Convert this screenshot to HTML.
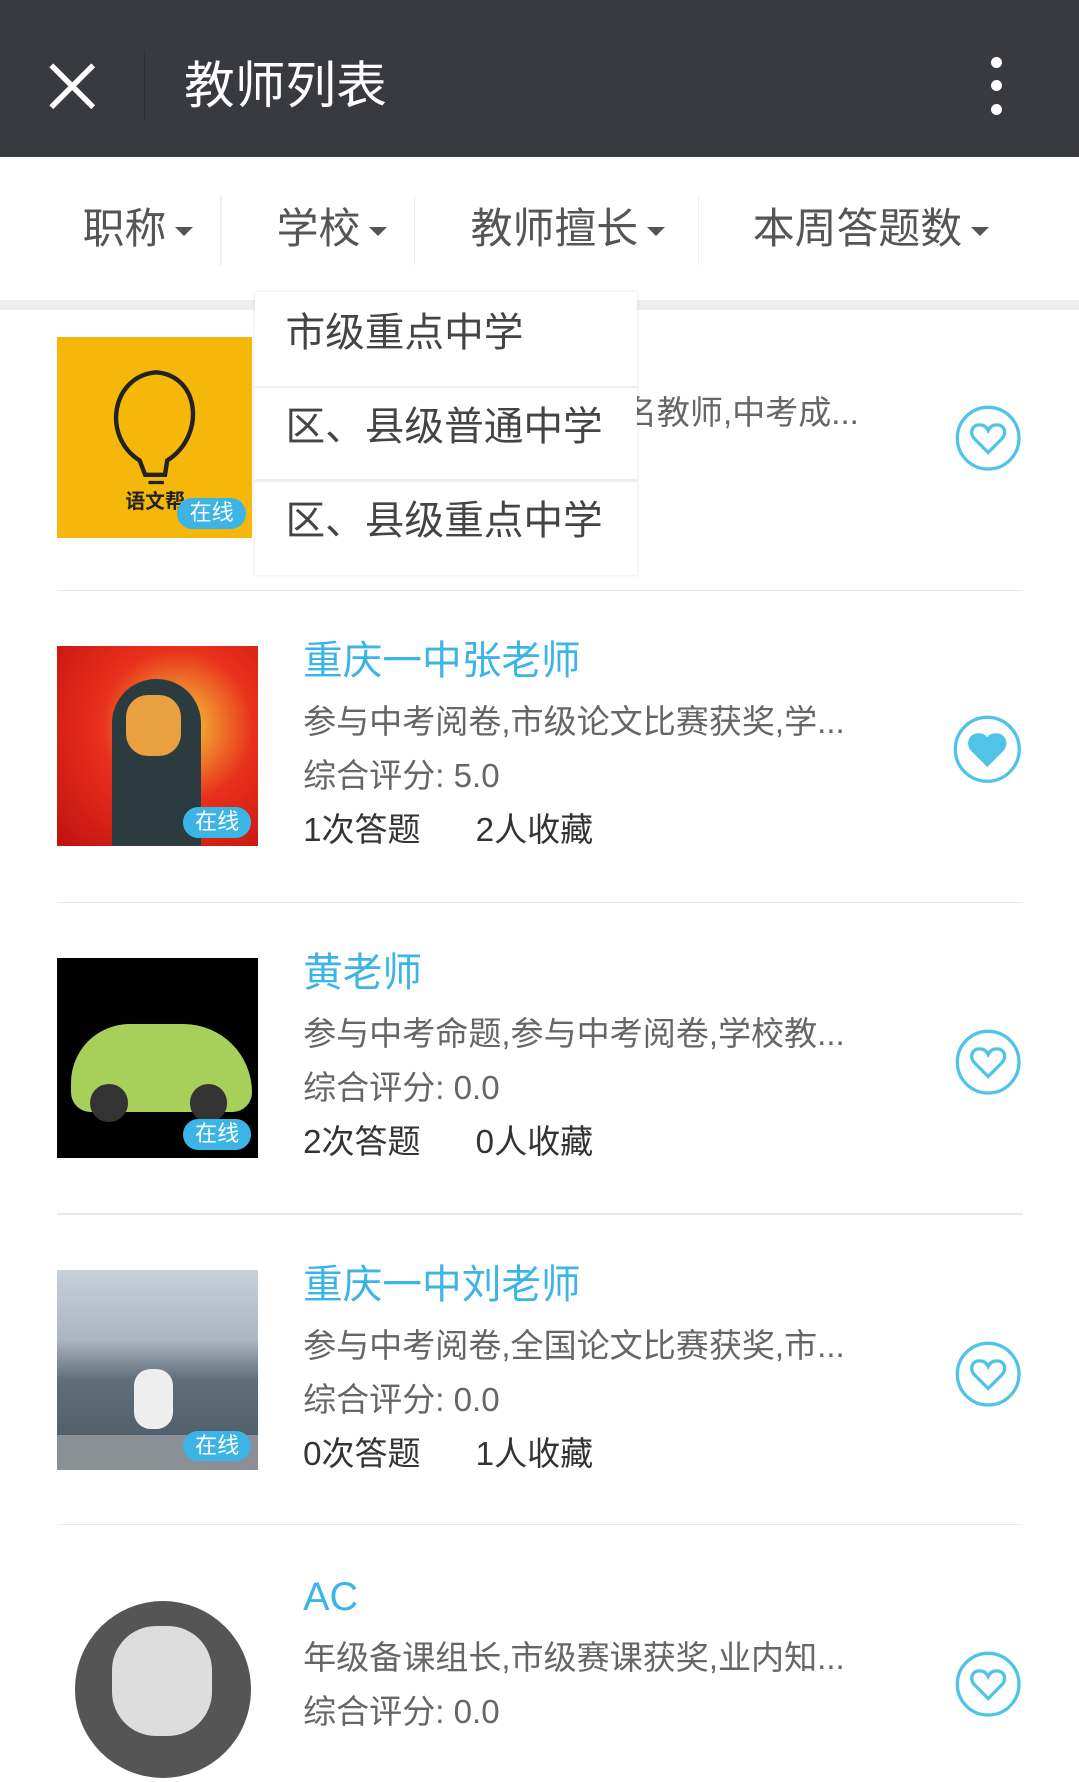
<!DOCTYPE html>
<html><head><meta charset="utf-8">
<style>
html,body{margin:0;padding:0;}
body{width:979px;height:1568px;overflow:hidden;zoom:1.10214;background:#fff;font-family:"Liberation Sans","Noto Sans CJK SC",sans-serif;position:relative;}
.abs{position:absolute;}
.hdr{left:0;top:0;width:979px;height:142px;background:#393a3f;}
.title{left:167px;top:48px;font-size:46px;color:#fff;line-height:60px;}
.filter{top:182px;font-size:38px;color:#555;line-height:50px;}
.tri{display:inline-block;width:0;height:0;border-left:9px solid transparent;border-right:9px solid transparent;border-top:9px solid #555;vertical-align:middle;margin-left:8px;}
.vd{top:178px;width:1px;height:62px;background:#eee;}
.sep{left:52px;width:876px;height:1px;background:#e8e8e8;}
.name{left:275px;font-size:36px;color:#3cb4e6;line-height:44px;}
.desc{left:275px;font-size:30px;color:#666;line-height:40px;}
.cnt{left:275px;font-size:30px;color:#333;line-height:40px;}
.img{left:52px;width:182px;height:182px;overflow:hidden;}
.badge{position:absolute;right:6px;bottom:8px;width:62px;height:28px;border-radius:14px;background:#3cb4e6;color:#fff;font-size:20px;line-height:28px;text-align:center;}
.dd{left:231px;top:265px;width:347px;height:257px;background:#fff;box-shadow:0 0 3px rgba(0,0,0,.12);}
.ddi{position:absolute;left:28px;font-size:36px;color:#444;line-height:44px;}
</style></head><body>
<div class="abs hdr"></div>
<svg class="abs" style="left:44px;top:56px" width="44" height="44"><path d="M3 3L41 41M41 3L3 41" stroke="#fff" stroke-width="5"/></svg>
<div class="abs" style="left:131px;top:45px;width:1px;height:65px;background:#2e2f33"></div>
<div class="abs title">教师列表</div>
<div class="abs" style="left:899px;top:52px;width:10px;height:10px;border-radius:5px;background:#fff"></div>
<div class="abs" style="left:899px;top:73px;width:10px;height:10px;border-radius:5px;background:#fff"></div>
<div class="abs" style="left:899px;top:94px;width:10px;height:10px;border-radius:5px;background:#fff"></div>

<div class="abs filter" style="left:75px">职称<span class="tri"></span></div>
<div class="abs vd" style="left:200px"></div>
<div class="abs filter" style="left:251px">学校<span class="tri"></span></div>
<div class="abs vd" style="left:376px"></div>
<div class="abs filter" style="left:427px">教师擅长<span class="tri"></span></div>
<div class="abs vd" style="left:633px"></div>
<div class="abs filter" style="left:683px">本周答题数<span class="tri"></span></div>
<div class="abs" style="left:0;top:272px;width:979px;height:9px;background:#eeeef0"></div>

<div class="abs img" style="top:306px;width:177px;background:#f5b80a">
<svg width="177" height="182"><path d="M75 112 C40 90 50 35 90 32 C130 35 135 90 100 112 L98 125 L80 125 Z" fill="none" stroke="#222" stroke-width="4"/><path d="M85 125 L95 125 M83 132 L97 132" stroke="#222" stroke-width="3"/><text x="62" y="155" font-size="18" font-weight="bold" fill="#222">语文帮</text></svg>
<div class="badge">在线</div></div>
<div class="abs desc" style="top:356px;left:566px">名教师,中考成...</div>
<div class="abs sep" style="top:535px"></div>

<div class="abs img" style="top:586px;background:radial-gradient(circle at 60% 40%,#f7d23a,#e8301c 45%,#c01010)">
<div style="position:absolute;left:50px;top:30px;width:80px;height:152px;background:#2b3b40;border-radius:40px 40px 0 0"></div>
<div style="position:absolute;left:62px;top:45px;width:50px;height:55px;background:#e8a040;border-radius:20px"></div>
<div class="badge">在线</div></div>
<div class="abs name" style="top:578px">重庆一中张老师</div>
<div class="abs desc" style="top:636px">参与中考阅卷,市级论文比赛获奖,学...</div>
<div class="abs desc" style="top:685px">综合评分: 5.0</div>
<div class="abs cnt" style="top:734px">1次答题&nbsp;&nbsp;&nbsp;&nbsp;&nbsp;&nbsp;2人收藏</div>
<div class="abs sep" style="top:818px"></div>

<div class="abs img" style="top:869px;background:#000">
<div style="position:absolute;left:12px;top:60px;width:165px;height:80px;background:#a6d05a;border-radius:60px 70px 20px 20px"></div>
<div style="position:absolute;left:30px;top:115px;width:34px;height:34px;border-radius:17px;background:#333"></div>
<div style="position:absolute;left:120px;top:115px;width:34px;height:34px;border-radius:17px;background:#333"></div>
<div class="badge">在线</div></div>
<div class="abs name" style="top:861px">黄老师</div>
<div class="abs desc" style="top:919px">参与中考命题,参与中考阅卷,学校教...</div>
<div class="abs desc" style="top:968px">综合评分: 0.0</div>
<div class="abs cnt" style="top:1017px">2次答题&nbsp;&nbsp;&nbsp;&nbsp;&nbsp;&nbsp;0人收藏</div>
<div class="abs sep" style="top:1101px"></div>

<div class="abs img" style="top:1152px;background:linear-gradient(#c8d0d8 0%,#aab6c0 35%,#5f6e7a 55%,#4a5864 100%)">
<div style="position:absolute;left:70px;top:90px;width:35px;height:55px;background:#eee;border-radius:15px"></div>
<div style="position:absolute;left:0;top:150px;width:182px;height:32px;background:#8a9096"></div>
<div class="badge">在线</div></div>
<div class="abs name" style="top:1144px">重庆一中刘老师</div>
<div class="abs desc" style="top:1202px">参与中考阅卷,全国论文比赛获奖,市...</div>
<div class="abs desc" style="top:1251px">综合评分: 0.0</div>
<div class="abs cnt" style="top:1300px">0次答题&nbsp;&nbsp;&nbsp;&nbsp;&nbsp;&nbsp;1人收藏</div>
<div class="abs sep" style="top:1383px"></div>

<div class="abs img" style="top:1435px;background:#fff">
<div style="position:absolute;left:16px;top:18px;width:160px;height:160px;border-radius:80px;background:#555"></div>
<div style="position:absolute;left:50px;top:40px;width:90px;height:100px;border-radius:40px;background:#ddd"></div>
</div>
<div class="abs name" style="top:1427px">AC</div>
<div class="abs desc" style="top:1485px">年级备课组长,市级赛课获奖,业内知...</div>
<div class="abs desc" style="top:1534px">综合评分: 0.0</div>

<svg class="abs" style="left:866px;top:367px" width="62" height="62"><circle cx="31" cy="31" r="28" fill="none" stroke="#4fc3e8" stroke-width="3"/><path d="M31 44 L19 32 C13 26 17 18 24 19 C28 19 30 22 31 24 C32 22 34 19 38 19 C45 18 49 26 43 32 Z" fill="none" stroke="#4fc3e8" stroke-width="3"/></svg>
<svg class="abs" style="left:864px;top:648px" width="64" height="64"><circle cx="32" cy="32" r="29" fill="none" stroke="#4fc3e8" stroke-width="3"/><path d="M32 46 L19 33 C13 27 17 18 25 19 C29 19 31 22 32 24 C33 22 35 19 39 19 C47 18 51 27 45 33 Z" fill="#4fc3e8" stroke="#4fc3e8" stroke-width="3"/></svg>
<svg class="abs" style="left:866px;top:933px" width="62" height="62"><circle cx="31" cy="31" r="28" fill="none" stroke="#4fc3e8" stroke-width="3"/><path d="M31 44 L19 32 C13 26 17 18 24 19 C28 19 30 22 31 24 C32 22 34 19 38 19 C45 18 49 26 43 32 Z" fill="none" stroke="#4fc3e8" stroke-width="3"/></svg>
<svg class="abs" style="left:866px;top:1216px" width="62" height="62"><circle cx="31" cy="31" r="28" fill="none" stroke="#4fc3e8" stroke-width="3"/><path d="M31 44 L19 32 C13 26 17 18 24 19 C28 19 30 22 31 24 C32 22 34 19 38 19 C45 18 49 26 43 32 Z" fill="none" stroke="#4fc3e8" stroke-width="3"/></svg>
<svg class="abs" style="left:866px;top:1497px" width="62" height="62"><circle cx="31" cy="31" r="28" fill="none" stroke="#4fc3e8" stroke-width="3"/><path d="M31 44 L19 32 C13 26 17 18 24 19 C28 19 30 22 31 24 C32 22 34 19 38 19 C45 18 49 26 43 32 Z" fill="none" stroke="#4fc3e8" stroke-width="3"/></svg>

<div class="abs dd">
<div class="ddi" style="top:15px">市级重点中学</div>
<div style="position:absolute;left:0;top:85px;width:347px;height:2px;background:#eee"></div>
<div class="ddi" style="top:101px">区、县级普通中学</div>
<div style="position:absolute;left:0;top:170px;width:347px;height:2px;background:#eee"></div>
<div class="ddi" style="top:186px">区、县级重点中学</div>
</div>
</body></html>
